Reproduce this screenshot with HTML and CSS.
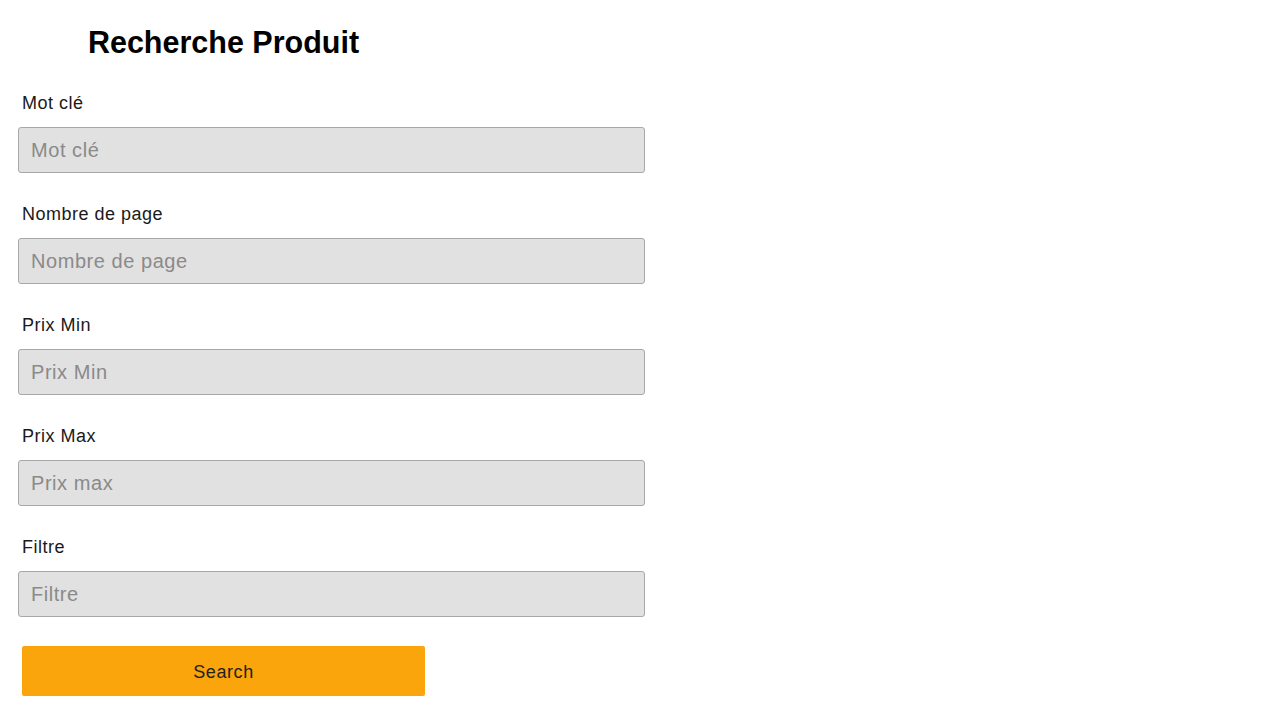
FILE: index.html
```html
<!DOCTYPE html>
<html lang="fr">
<head>
<meta charset="utf-8">
<title>Recherche Produit</title>
<link rel="stylesheet" href="styles.css">
</head>
<body>
<main class="page">
  <h1 class="title">Recherche Produit</h1>
  <form class="form">
    <div class="field">
      <label class="label" for="kw">Mot clé</label>
      <input class="input" id="kw" type="text" placeholder="Mot clé">
    </div>
    <div class="field">
      <label class="label" for="np">Nombre de page</label>
      <input class="input" id="np" type="text" placeholder="Nombre de page">
    </div>
    <div class="field">
      <label class="label" for="pmin">Prix Min</label>
      <input class="input" id="pmin" type="text" placeholder="Prix Min">
    </div>
    <div class="field">
      <label class="label" for="pmax">Prix Max</label>
      <input class="input" id="pmax" type="text" placeholder="Prix max">
    </div>
    <div class="field">
      <label class="label" for="flt">Filtre</label>
      <input class="input" id="flt" type="text" placeholder="Filtre">
    </div>
    <button class="search-btn" type="button">Search</button>
  </form>
</main>
</body>
</html>
```

FILE: styles.css
```css
html, body {
  margin: 0;
  padding: 0;
  background: #ffffff;
}

body {
  font-family: "Liberation Sans", Arial, sans-serif;
  color: #111111;
}

.page {
  padding: 25px 0 0 18px;
}

.title {
  margin: 0 0 33px 4px;
  width: 403px;
  text-align: center;
  font-size: 30.5px;
  line-height: 34px;
  font-weight: bold;
  color: #000000;
}

.form {
  display: flex;
  flex-direction: column;
  align-items: flex-start;
}

.field {
  display: flex;
  flex-direction: column;
  gap: 13px;
}

.field + .field {
  margin-top: 30px;
}

.label {
  display: block;
  padding: 1px 0 0 4px;
  font-size: 18px;
  line-height: 21px;
  letter-spacing: 0.5px;
  color: #1a1a1a;
}

.input {
  box-sizing: border-box;
  width: 627px;
  height: 46px;
  margin: 0;
  padding: 0 12px;
  border: 1px solid #a8a8a8;
  border-radius: 3px;
  background: #e1e1e1;
  font-family: "Liberation Sans", Arial, sans-serif;
  font-size: 20px;
  letter-spacing: 0.55px;
  color: #333333;
  outline: none;
}

.input::placeholder {
  color: #8a8a8a;
  opacity: 1;
}

.search-btn {
  margin: 29px 0 0 4px;
  padding: 2px 0 0;
  width: 403px;
  height: 50px;
  border: none;
  border-radius: 2px;
  background: #f9a50b;
  font-family: "Liberation Sans", Arial, sans-serif;
  font-size: 18px;
  letter-spacing: 0.6px;
  color: #1f1f1f;
  cursor: pointer;
}
```
